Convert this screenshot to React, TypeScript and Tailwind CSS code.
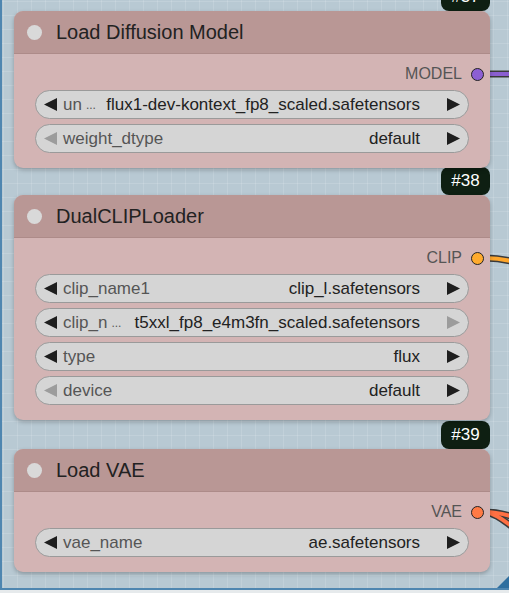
import React from 'react'

type Widget = {
  label: string
  value: string
  truncated?: boolean
  leftOff?: boolean
  rightOff?: boolean
}

type NodeProps = {
  id: string
  title: string
  output: string
  dotColor: string
  widgets: Widget[]
  badgeClass?: string
}

function Arrow({ dir, off }: { dir: 'left' | 'right'; off?: boolean }) {
  return (
    <svg width="13" height="13" viewBox="0 0 13 13" className="shrink-0">
      <path
        d={dir === 'left' ? 'M0 6.5 L13 0 L13 13 Z' : 'M13 6.5 L0 0 L0 13 Z'}
        fill={off ? '#9c9c9c' : '#1e1e1e'}
      />
    </svg>
  )
}

function WidgetRow({ w }: { w: Widget }) {
  return (
    <div className="flex h-[29px] items-center rounded-full border border-[#9a9a9a] bg-[#d5d5d5] px-[8px] text-[17px] leading-none">
      <Arrow dir="left" off={w.leftOff} />
      <span className="ml-[6px] text-[#555]">{w.label}</span>
      {w.truncated && <span className="ml-[4px] text-[12px] text-[#555]">...</span>}
      <span className="ml-auto whitespace-nowrap text-[#222]">{w.value}</span>
      <span className="ml-[27px]">
        <Arrow dir="right" off={w.rightOff} />
      </span>
    </div>
  )
}

function Node({ id, title, output, dotColor, widgets, badgeClass }: NodeProps) {
  return (
    <div className="flex flex-col">
      <div className={`relative z-0 flex h-[28px] w-[49px] items-center justify-center self-end rounded-[8px] bg-[#0e1f12] text-[17px] text-white ${badgeClass ?? ''}`}>
        {id}
      </div>
      <div className="relative z-10 overflow-hidden rounded-[9px] bg-[#d3b4b4] shadow-[0_2px_4px_rgba(0,0,0,0.25)]">
        <div className="flex h-[43px] items-center border-b border-[#ad8b89] bg-[#b99795] pl-[13px]">
          <div className="h-[15px] w-[15px] rounded-full bg-[#d9d9d9]" />
          <span className="ml-[14px] text-[20px] text-[#222]">{title}</span>
        </div>
        <div className="px-[6px] pb-[15px] pt-[9px]">
          <div className="flex h-[22px] items-center justify-end gap-[9px]">
            <span className="text-[16px] text-[#555]">{output}</span>
            <span className={`h-[13px] w-[13px] rounded-full border-[1.5px] border-[#222] ${dotColor}`} />
          </div>
          <div className="mx-[15px] mt-[5px] flex flex-col gap-[5px]">
            {widgets.map((w) => (
              <WidgetRow key={w.label} w={w} />
            ))}
          </div>
        </div>
      </div>
    </div>
  )
}

export default function App() {
  return (
    <div className="relative h-[593px] w-[509px] overflow-hidden bg-[#e6eaec] font-['Liberation_Sans',Arial,sans-serif]">
      <div className="relative h-[590px] w-[509px] overflow-hidden border-b-2 border-l-2 border-[#4f86b0] bg-[#b8c9d3] [background-image:linear-gradient(to_right,rgba(255,255,255,0.13)_1px,transparent_1px),linear-gradient(to_bottom,rgba(255,255,255,0.13)_1px,transparent_1px)] [background-position:1px_1px] [background-size:14px_14px]">
        <div className="ml-[12px] mt-[-17px] flex w-[476px] flex-col">
          <Node
            id="#37"
            title="Load Diffusion Model"
            output="MODEL"
            dotColor="bg-[#8c5fd3]"
            widgets={[
              { label: 'un', value: 'flux1-dev-kontext_fp8_scaled.safetensors', truncated: true },
              { label: 'weight_dtype', value: 'default', leftOff: true },
            ]}
          />
          <Node
            id="#38"
            title="DualCLIPLoader"
            output="CLIP"
            dotColor="bg-[#ffab2e]"
            badgeClass="mt-[-1px]"
            widgets={[
              { label: 'clip_name1', value: 'clip_l.safetensors' },
              { label: 'clip_n', value: 't5xxl_fp8_e4m3fn_scaled.safetensors', truncated: true, rightOff: true },
              { label: 'type', value: 'flux' },
              { label: 'device', value: 'default', leftOff: true },
            ]}
          />
          <Node
            id="#39"
            title="Load VAE"
            output="VAE"
            dotColor="bg-[#ff7a45]"
            badgeClass="mt-[1px]"
            widgets={[{ label: 'vae_name', value: 'ae.safetensors' }]}
          />
        </div>

        {/* links leaving the outputs */}
        <svg className="absolute left-0 top-0" width="509" height="590" viewBox="0 0 509 590">
          <path d="M483 74 L512 74" stroke="#3a3a3a" strokeWidth="7" fill="none" />
          <path d="M483 74 L512 74" stroke="#8a5fd0" strokeWidth="4" fill="none" />
          <path d="M483 258 C495 258 502 259 512 262" stroke="#3a3a3a" strokeWidth="7" fill="none" />
          <path d="M483 258 C495 258 502 259 512 262" stroke="#ffa62b" strokeWidth="4" fill="none" />
          <path d="M483 512 C495 512 502 514 512 517" stroke="#3a3a3a" strokeWidth="7" fill="none" />
          <path d="M483 512 C495 514 502 521 512 528" stroke="#3a3a3a" strokeWidth="7" fill="none" />
          <path d="M483 512 C495 512 502 514 512 517" stroke="#ff7043" strokeWidth="4" fill="none" />
          <path d="M483 512 C495 514 502 521 512 528" stroke="#ff7043" strokeWidth="4" fill="none" />
          <path d="M509 574 L509 590 L493 590 Z" fill="#2f6f9f" />
        </svg>
      </div>
    </div>
  )
}
